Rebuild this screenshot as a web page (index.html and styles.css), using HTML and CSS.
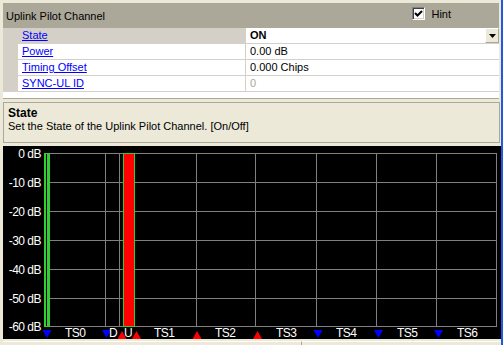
FILE: index.html
```html
<!DOCTYPE html>
<html>
<head>
    <title>Uplink Pilot Channel</title>
    <link rel="stylesheet" href="styles.css">
</head>
<body>
    <div class="window">
        <div class="header">
            <span class="header-title">Uplink Pilot Channel</span>
            <label class="hint-toggle">
                <span class="checkbox">
                    <svg width="11" height="11" viewBox="0 0 11 11"><polyline points="2,5 4.5,7.5 9,3" fill="none" stroke="#000" stroke-width="2"/></svg>
                </span>
                <span>Hint</span>
            </label>
        </div>

        <div class="prop-grid">
            <div class="prop-row selected">
                <div class="prop-margin"></div>
                <div class="prop-name"><a href="#">State</a></div>
                <div class="prop-value">
                    <b>ON</b>
                    <span class="drop-button"><svg width="7" height="4" viewBox="0 0 7 4"><polygon points="0,0 7,0 3.5,4" fill="#000"/></svg></span>
                </div>
            </div>
            <div class="prop-row">
                <div class="prop-margin"></div>
                <div class="prop-name"><a href="#">Power</a></div>
                <div class="prop-value">0.00 dB</div>
            </div>
            <div class="prop-row">
                <div class="prop-margin"></div>
                <div class="prop-name"><a href="#">Timing Offset</a></div>
                <div class="prop-value">0.000 Chips</div>
            </div>
            <div class="prop-row">
                <div class="prop-margin"></div>
                <div class="prop-name"><a href="#">SYNC-UL ID</a></div>
                <div class="prop-value disabled">0</div>
            </div>
            <div class="prop-blank"></div>
        </div>

        <div class="hint-box">
            <div class="hint-title">State</div>
            <div class="hint-text">Set the State of the Uplink Pilot Channel. [On/Off]</div>
        </div>

        <div class="chart">
            <svg class="chart-svg" width="498" height="193" viewBox="0 0 498 193">
                <g class="grid-lines">
                    <line x1="41" y1="7.5" x2="494" y2="7.5"/>
                    <line x1="41" y1="36.5" x2="494" y2="36.5"/>
                    <line x1="41" y1="65.5" x2="494" y2="65.5"/>
                    <line x1="41" y1="94.5" x2="494" y2="94.5"/>
                    <line x1="41" y1="123.5" x2="494" y2="123.5"/>
                    <line x1="41" y1="152.5" x2="494" y2="152.5"/>
                    <line x1="41" y1="180.5" x2="494" y2="180.5"/>
                    <line x1="41.5" y1="7" x2="41.5" y2="181"/>
                    <line x1="102.5" y1="7" x2="102.5" y2="181"/>
                    <line x1="116.5" y1="7" x2="116.5" y2="181"/>
                    <line x1="193.5" y1="7" x2="193.5" y2="181"/>
                    <line x1="252.5" y1="7" x2="252.5" y2="181"/>
                    <line x1="313.5" y1="7" x2="313.5" y2="181"/>
                    <line x1="373.5" y1="7" x2="373.5" y2="181"/>
                    <line x1="433.5" y1="7" x2="433.5" y2="181"/>
                    <line x1="493.5" y1="7" x2="493.5" y2="181"/>
                </g>

                <!-- TS0 and UpPTS power bars -->
                <rect class="bar-green" x="41" y="7" width="6" height="174"/>
                <rect x="43" y="8" width="1" height="172" fill="#000"/>
                <rect class="bar-red" x="120.5" y="7.5" width="11" height="173"/>

                <g class="axis-label">
                    <text x="38" y="12">0 dB</text>
                    <text x="38" y="41">-10 dB</text>
                    <text x="38" y="70">-20 dB</text>
                    <text x="38" y="99">-30 dB</text>
                    <text x="38" y="128">-40 dB</text>
                    <text x="38" y="157">-50 dB</text>
                    <text x="38" y="185">-60 dB</text>
                </g>

                <g class="marker-down">
                    <polygon points="39.5,184 48.5,184 44,192"/>
                    <polygon points="99,184 108,184 103.5,192"/>
                    <polygon points="310.5,184 319.5,184 315,192"/>
                    <polygon points="371,184 380,184 375.5,192"/>
                    <polygon points="431,184 440,184 435.5,192"/>
                </g>
                <g class="marker-up">
                    <polygon points="114.5,193 123.5,193 119,185"/>
                    <polygon points="129,193 138,193 133.5,185"/>
                    <polygon points="189.5,193 198.5,193 194,185"/>
                    <polygon points="250,193 259,193 254.5,185"/>
                </g>

                <g class="slot-label">
                    <text x="62" y="191">TS0</text>
                    <text x="106" y="191">D</text>
                    <text x="121" y="191">U</text>
                    <text x="151" y="191">TS1</text>
                    <text x="212" y="191">TS2</text>
                    <text x="273" y="191">TS3</text>
                    <text x="333" y="191">TS4</text>
                    <text x="394" y="191">TS5</text>
                    <text x="454" y="191">TS6</text>
                </g>
            </svg>
        </div>

        <div class="status-bar">
            <div class="status-panel first"></div>
            <div class="status-panel"></div>
        </div>
    </div>
</body>
</html>
```

FILE: styles.css
```css
html,
body {
    margin: 0;
    padding: 0;
    overflow: hidden;
}

body {
    font-family: "Liberation Sans", Arial, sans-serif;
    font-size: 11px;
    color: #000;
    background-color: #ece9d8;
    width: 503px;
    height: 345px;
}

.window {
    box-sizing: border-box;
    width: 503px;
    height: 345px;
    padding: 3px 0 0 3px;
    border-right: 2px solid #2058e8;
}

/* title band */

.header {
    display: flex;
    align-items: center;
    height: 25px;
    margin-right: 2px;
    padding-left: 3px;
    background-color: #aca899;
}

.header-title {
    flex: 1;
}

.hint-toggle {
    display: flex;
    align-items: center;
    align-self: flex-start;
    margin-top: 4px;
    margin-right: 48px;
}

.checkbox {
    box-sizing: border-box;
    display: block;
    width: 13px;
    height: 13px;
    margin-right: 6px;
    background-color: #fff;
    border: 1px solid;
    border-color: #808080 #fff #fff #808080;
    box-shadow: inset 1px 1px #404040, inset -1px -1px #d4d0c8;
}

.checkbox svg {
    display: block;
}

/* property grid */

.prop-grid {
    margin-right: 2px;
    background-color: #fff;
    border-bottom: 1px solid #aca899;
}

.prop-row {
    display: flex;
    height: 15px;
    line-height: 15px;
    border-bottom: 1px solid #d4d0c8;
}

.prop-margin {
    width: 15px;
    background-color: #d4d0c8;
}

.prop-name {
    width: 223px;
    padding-left: 4px;
    border-right: 1px solid #d4d0c8;
}

.selected .prop-name {
    background-color: #d4d0c8;
}

.prop-name a {
    color: #0000ff;
    text-decoration: underline;
}

.prop-value {
    flex: 1;
    display: flex;
    padding-left: 4px;
}

.prop-value.disabled {
    color: #aca899;
}

.drop-button {
    box-sizing: border-box;
    display: flex;
    align-items: center;
    justify-content: center;
    width: 14px;
    height: 15px;
    margin-left: auto;
    padding-top: 1px;
    background-color: #ece9d8;
    border: 1px solid;
    border-color: #fff #aca899 #aca899 #fff;
}

.drop-button svg {
    display: block;
}

.prop-blank {
    height: 6px;
}

/* hint box */

.hint-box {
    margin: 3px 1px 0 0;
    padding: 3px 4px 9px 4px;
    border: 1px solid #aca899;
}

.hint-title {
    font-size: 12px;
    font-weight: bold;
    line-height: 14px;
}

.hint-text {
    line-height: 13px;
}

/* slot power chart */

.chart {
    height: 193px;
    margin-top: 3px;
    background-color: #000;
}

.chart-svg {
    display: block;
    overflow: visible;
}

.grid-lines line {
    stroke: #808080;
    stroke-width: 1;
}

.bar-green {
    fill: #33cc33;
}

.bar-red {
    fill: #ff0000;
    stroke: #33cc33;
    stroke-width: 1;
}

.axis-label text,
.slot-label text {
    font-family: "Liberation Sans", Arial, sans-serif;
    font-size: 12px;
    letter-spacing: -0.5px;
    fill: #fff;
}

.axis-label text {
    text-anchor: end;
}

.marker-down polygon {
    fill: #0000ff;
}

.marker-up polygon {
    fill: #ff0000;
}

.status-bar {
    display: flex;
    height: 4px;
    margin-top: 2px;
}

.status-panel {
    flex: 1;
    border-top: 1px solid #fff;
}

.status-panel.first {
    flex: none;
    width: 298px;
    border-right: 1px solid #aca899;
}
```
